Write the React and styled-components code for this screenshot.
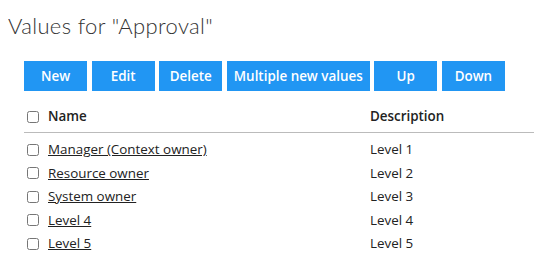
import React from 'react';
import styled, { createGlobalStyle } from 'styled-components';

const GlobalStyle = createGlobalStyle`
  html {
    overflow: hidden;
  }
  body {
    margin: 8px 0 0 8px;
    font-family: "Open Sans", "Liberation Sans", sans-serif;
    color: #222;
    background: #fff;
  }
`;

const values = [
  { name: 'Manager (Context owner)', description: 'Level 1' },
  { name: 'Resource owner', description: 'Level 2' },
  { name: 'System owner', description: 'Level 3' },
  { name: 'Level 4', description: 'Level 4' },
  { name: 'Level 5', description: 'Level 5' },
];

const actions = ['New', 'Edit', 'Delete', 'Multiple new values', 'Up', 'Down'];

function App() {
  return (
    <Page>
      <GlobalStyle />
      <Title>Values for "Approval"</Title>
      <Content>
        <Toolbar>
          {actions.map((a) => (
            <Button key={a}>{a}</Button>
          ))}
        </Toolbar>
        <Table>
          <thead>
            <HeadRow>
              <CheckCell as="th"><Check type="checkbox" /></CheckCell>
              <HeadCell>Name</HeadCell>
              <HeadCell>Description</HeadCell>
            </HeadRow>
          </thead>
          <tbody>
            {values.map((v) => (
              <Row key={v.name}>
                <CheckCell><Check type="checkbox" /></CheckCell>
                <Cell><Link href="#">{v.name}</Link></Cell>
                <Cell>{v.description}</Cell>
              </Row>
            ))}
          </tbody>
        </Table>
      </Content>
    </Page>
  );
}

const Page = styled.div`
  display: flex;
  flex-direction: column;
  align-items: flex-start;
`;

const Title = styled.h1`
  margin: 4px 0 0;
  font-family: Lato, "Liberation Sans", sans-serif;
  font-weight: 300;
  font-size: 22px;
  letter-spacing: 0.35px;
  line-height: 28px;
  color: #333;
`;

const Content = styled.div`
  box-sizing: border-box;
  width: calc(100vw - 8px);
  padding-left: 16px;
`;

const Toolbar = styled.div`
  display: flex;
  gap: 4.6px;
  margin-top: 21px;
`;

const Button = styled.button`
  min-width: 63px;
  height: 30px;
  padding: 0 7px;
  border: none;
  background: #2196f3;
  color: #fff;
  font-family: "Open Sans", sans-serif;
  font-weight: 600;
  font-size: 13.4px;
  cursor: pointer;
`;

const Table = styled.table`
  width: 100%;
  border-collapse: collapse;
  margin-top: 15px;
  font-size: 13.4px;
`;

const HeadRow = styled.tr`
  border-bottom: 1px solid #bbb;
`;

const HeadCell = styled.th`
  text-align: left;
  font-weight: 600;
  padding: 0 0 6px;
  line-height: 20px;
  &:nth-child(2) {
    width: 322px;
  }
`;

const CheckCell = styled.td`
  box-sizing: border-box;
  width: 24px;
  padding: 0 0 0 3px;
  vertical-align: middle;
  th& {
    padding-bottom: 4px;
  }
`;

const Row = styled.tr`
  &:first-child td {
    padding-top: 5px;
  }
`;

const Cell = styled.td`
  padding: 0;
  line-height: 23.5px;
`;

const Check = styled.input`
  width: 12px;
  height: 12px;
  margin: 0;
  display: block;
`;

const Link = styled.a`
  color: #222;
  text-decoration: underline;
`;

export default App;
